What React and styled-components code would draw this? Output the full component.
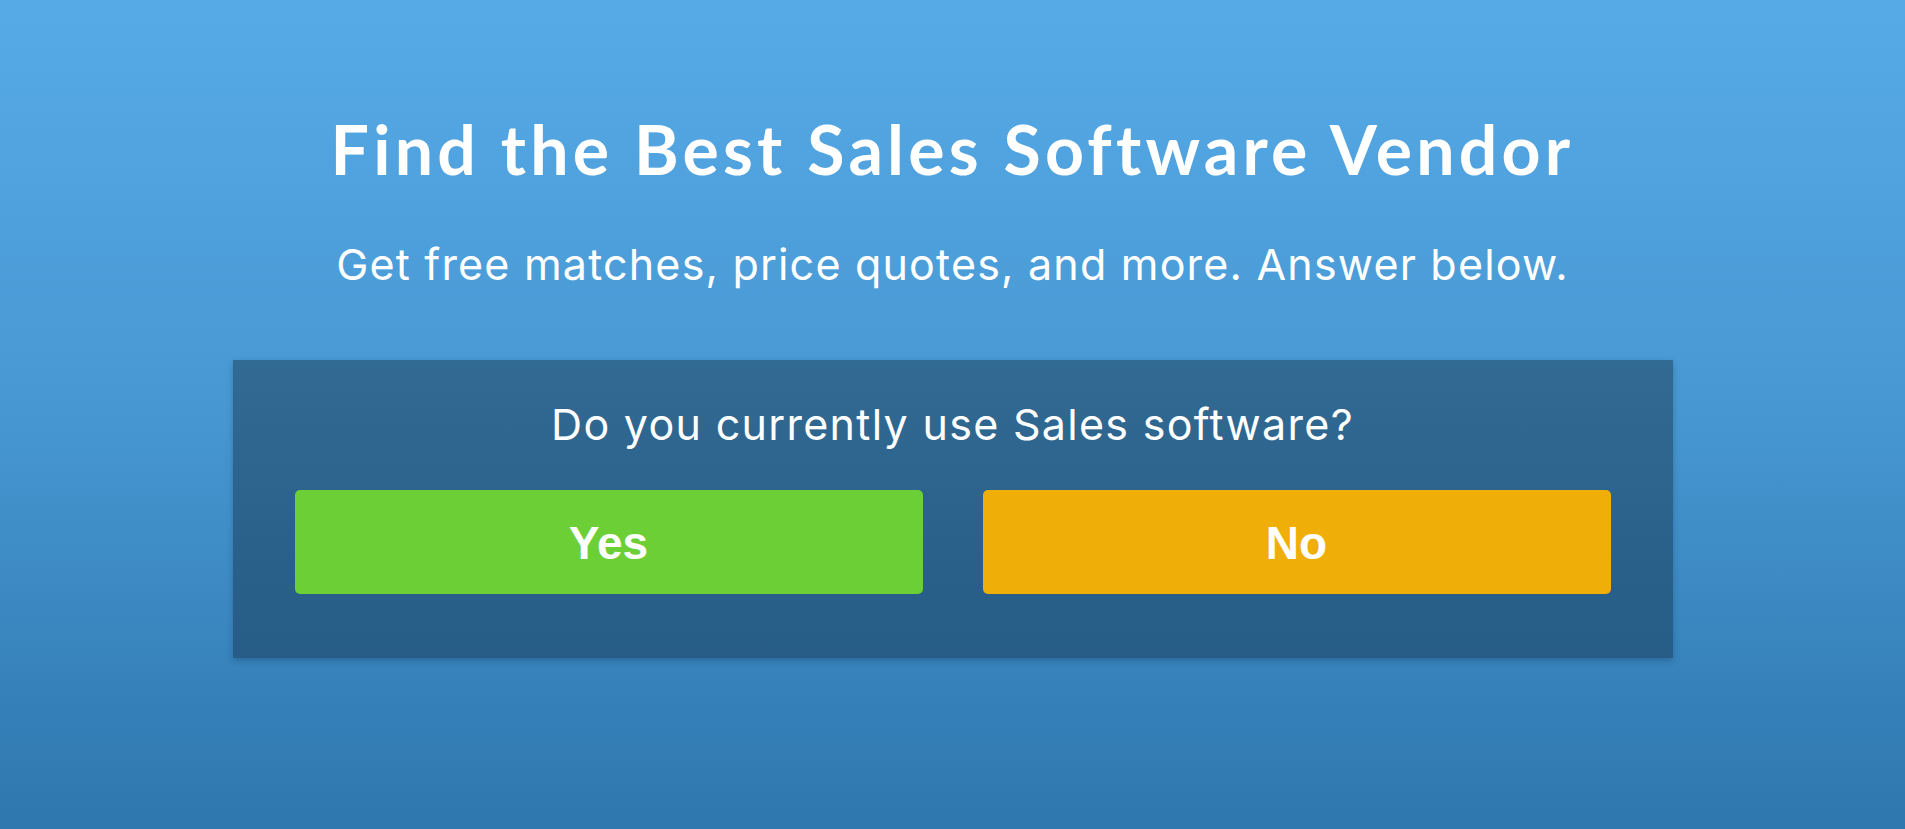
import React from "react";
import styled, { createGlobalStyle } from "styled-components";

const GlobalStyle = createGlobalStyle`
  html, body {
    margin: 0;
    padding: 0;
  }
  body {
    font-family: "Inter", "Liberation Sans", sans-serif;
  }
`;

// 전체 배경
const Page = styled.div`
  min-height: 829px;
  box-sizing: border-box;
  background: linear-gradient(180deg, #56abe7 0%, #4797d2 50%, #2e76ae 100%);
  display: flex;
  flex-direction: column;
  align-items: center;
  padding-top: 108px;
  color: #fff;
`;

const Title = styled.h1`
  margin: 0;
  font-family: "Lato", "Liberation Sans", sans-serif;
  font-size: 68px;
  font-weight: 700;
  line-height: 82px;
  letter-spacing: 4.2px;
  text-align: center;
`;

const SubTitle = styled.p`
  margin: 48px 0 0;
  font-family: "Inter", "Liberation Sans", sans-serif;
  font-size: 43px;
  font-weight: 400;
  line-height: 52px;
  letter-spacing: 1.2px;
  text-align: center;
`;

// 질문 박스
const QuestionBox = styled.div`
  width: 1440px;
  margin-top: 70px;
  box-sizing: border-box;
  padding: 38px 62px 64px;
  background: linear-gradient(180deg, #316a93 0%, #265c85 100%);
  box-shadow: 0 3px 6px rgba(20, 50, 80, 0.3);
  display: flex;
  flex-direction: column;
  align-items: center;
`;

const Question = styled.h2`
  margin: 0;
  font-family: "Inter", "Liberation Sans", sans-serif;
  font-size: 43px;
  font-weight: 400;
  line-height: 52px;
  letter-spacing: 1.3px;
`;

const Buttons = styled.div`
  width: 100%;
  margin-top: 40px;
  display: grid;
  grid-template-columns: 1fr 1fr;
  gap: 60px;
`;

const AnswerButton = styled.button`
  height: 104px;
  border: none;
  border-radius: 5px;
  background: ${(p) => p.$color};
  color: #fff;
  font-family: "Liberation Sans", Arial, sans-serif;
  font-size: 46px;
  font-weight: 700;
  padding-top: 2px;
  cursor: pointer;
`;

const App = () => {
  return (
    <>
      <GlobalStyle />
      <Page>
        <Title>Find the Best Sales Software Vendor</Title>
        <SubTitle>Get free matches, price quotes, and more. Answer below.</SubTitle>
        <QuestionBox>
          <Question>Do you currently use Sales software?</Question>
          <Buttons>
            <AnswerButton $color="#6ccf35">Yes</AnswerButton>
            <AnswerButton $color="#efae08">No</AnswerButton>
          </Buttons>
        </QuestionBox>
      </Page>
    </>
  );
};

export default App;
